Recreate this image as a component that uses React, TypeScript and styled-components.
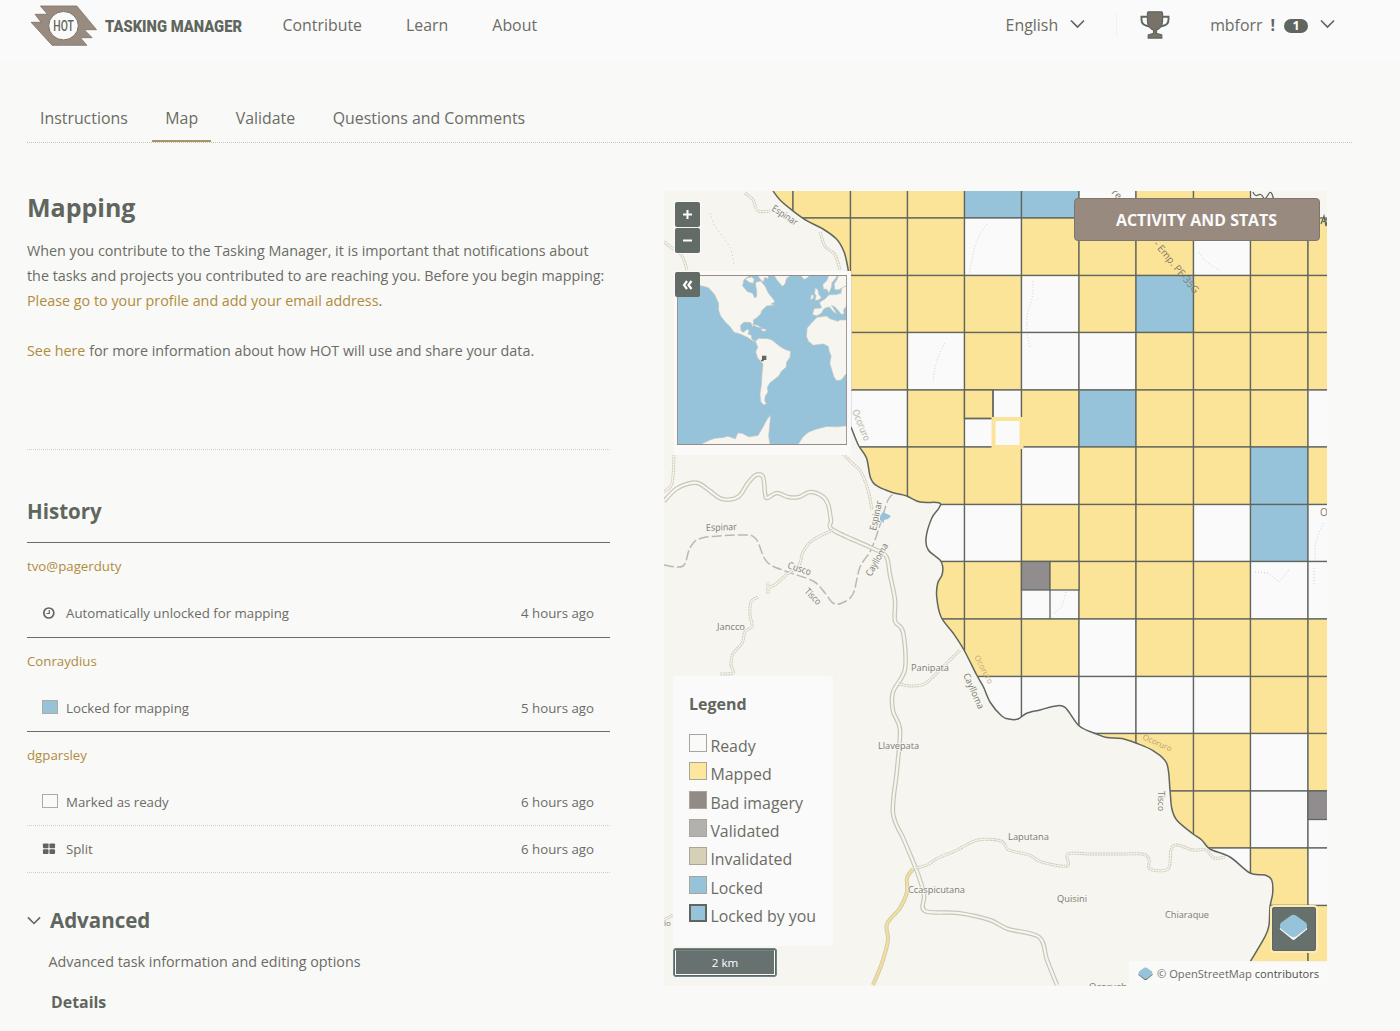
import React from "react";
import styled, { createGlobalStyle } from "styled-components";

const c = {
  page: "#f9f9f8",
  panel: "#fafafa",
  dark: "#60665e",
  text: "#6b6c65",
  brown: "#9a8b80",
  link: "#b08c3c",
  yellow: "#fbe397",
  blue: "#96c3da",
  land: "#f6f5f0",
  road: "#c6c6bd",
  rule: "#cfd0c4",
  bad: "#918d8e",
};

const Global = createGlobalStyle`
  * { box-sizing: border-box; }
  body { margin: 0; background: ${c.page}; overflow: hidden; font-family: "Open Sans", "Noto Sans", sans-serif; color: ${c.text}; }
  h2, h3, h4, p { margin: 0; }
  svg { display: block; flex: none; }
`;

const Page = styled.div`
  width: 1400px;
  height: 1031px;
  overflow: hidden;
`;
const Header = styled.header`
  display: flex;
  align-items: center;
  height: 61px;
  padding: 0 65px 11px 30px;
  background: ${c.panel};
  font-size: 15.9px;
  line-height: 24px;
`;
const Brand = styled.div`
  width: 252.5px;
  display: flex;
  align-items: center;
  gap: 7.5px;
  padding-top: 2px;
`;
const Nav = styled.nav`
  display: flex;
  gap: 44px;
  flex: 1;
`;
const NavLink = styled.a`
  white-space: nowrap;
`;
const HeaderRight = styled.div`
  display: flex;
  align-items: center;
`;
const Language = styled.div`
  display: flex;
  align-items: center;
  gap: 12px;
  padding-right: 31px;
  border-right: 1px solid #f3f1e9;
`;
const Trophy = styled.div`
  margin: 0 40px 0 23px;
`;
const User = styled.div`
  display: flex;
  align-items: center;
`;
const Alert = styled.b`
  margin: 0 9px 0 8px;
  color: ${c.dark};
`;
const Count = styled.span`
  width: 24px;
  height: 14px;
  border-radius: 7px;
  background: ${c.dark};
  color: #fff;
  font-size: 12.5px;
  line-height: 14px;
  font-weight: 700;
  text-align: center;
  margin: 2px 12px 0 0;
`;
const Tabs = styled.nav`
  display: flex;
  gap: 11.6px;
  height: 82px;
  margin: 0 48px 0 27px;
  align-items: flex-end;
  border-bottom: 1px dotted #c3c4b5;
`;
const Tab = styled.a<{ $active?: boolean }>`
  height: 49px;
  padding: 13px 13px 0;
  font-size: 15.88px;
  line-height: 24px;
  border-bottom: 2px solid ${(p) => (p.$active ? "#ab9468" : "transparent")};
`;
const Content = styled.main`
  display: grid;
  grid-template-columns: 583px 663px;
  column-gap: 54px;
  padding: 48px 0 0 27px;
`;
const Left = styled.section`
  display: flex;
  flex-direction: column;
`;
const Title = styled.h2`
  height: 47px;
  font-size: 25px;
  line-height: 33px;
  color: ${c.dark};
`;
const Intro = styled.div`
  height: 212px;
  font-size: 14.33px;
  line-height: 25px;
  white-space: nowrap;
  border-bottom: 1px dotted ${c.rule};
`;
const Paragraph = styled.p`
  margin-bottom: 25px;
`;
const Link = styled.a`
  color: ${c.link};
`;
const HistoryTitle = styled.h3`
  height: 92px;
  padding-top: 46px;
  font-size: 20.5px;
  line-height: 31px;
  color: ${c.dark};
`;
const Group = styled.div`
  border-top: 1px solid #6d6d64;
  font-size: 13.25px;
`;
const UserRow = styled.div`
  height: 47px;
  line-height: 47px;
  color: ${c.link};
`;
const Item = styled.div<{ $rule?: boolean }>`
  display: flex;
  align-items: center;
  height: 46.7px;
  padding: 0 16px 0.6px 15px;
  border-bottom: ${(p) => (p.$rule ? `1px dotted ${c.rule}` : "0")};
`;
const ItemIcon = styled.span`
  width: 24px;
  display: flex;
`;
const ItemLabel = styled.span`
  flex: 1;
`;
const MiniSwatch = styled.span<{ $color: string }>`
  width: 16px;
  height: 14px;
  margin: -2px 0 0 0;
  border: 1px solid #b0aaa2;
  background: ${(p) => p.$color};
`;
const AdvancedTitle = styled.h3`
  display: flex;
  align-items: center;
  gap: 9px;
  margin-top: 30px;
  height: 34px;
  font-size: 20.5px;
  color: ${c.dark};
`;
const ToggleMark = styled.span`
  padding-top: 4px;
`;
const AdvancedText = styled.p`
  padding: 13.5px 0 0 21.5px;
  font-size: 14.33px;
  line-height: 24px;
`;
const Details = styled.h4`
  padding: 16px 0 0 24px;
  font-size: 15.9px;
  line-height: 24px;
  color: ${c.dark};
`;

const MapFrame = styled.section`
  position: relative;
  width: 663px;
  height: 795px;
  background: ${c.land};
`;
const StatsButton = styled.button`
  position: absolute;
  left: 410px;
  top: 7px;
  width: 246px;
  height: 43px;
  padding: 0 1px 0 0;
  border: 1px solid #7c766e;
  border-radius: 4px;
  background: #998a80;
  color: #fafafa;
  font: 700 15.9px "Open Sans", sans-serif;
`;
const ZoomControls = styled.div`
  position: absolute;
  left: 11px;
  top: 11px;
  display: flex;
  flex-direction: column;
  gap: 1px;
  box-shadow: 0 0 0 1px #fafafa;
  border-radius: 2px;
`;
const ControlButton = styled.button`
  width: 25px;
  height: 25px;
  padding: 0;
  border: 0;
  border-radius: 2px;
  display: grid;
  place-items: center;
  background: #636b66;
  color: #fff;
`;
const Overview = styled.div`
  position: absolute;
  left: 10px;
  top: 80px;
  width: 177px;
  height: 184px;
  padding: 4px 0 0 3px;
  background: ${c.panel};
`;
const Collapse = styled.div`
  position: absolute;
  left: 11px;
  top: 81px;
`;
const Legend = styled.div`
  position: absolute;
  left: 9px;
  top: 485px;
  width: 160px;
  height: 270px;
  padding: 15px 0 0 16px;
  background: #fafafa;
  border-radius: 2px;
`;
const LegendTitle = styled.h4`
  font-size: 16px;
  line-height: 27px;
  height: 40px;
  color: ${c.dark};
`;
const LegendRow = styled.div`
  display: flex;
  align-items: flex-start;
  gap: 3.4px;
  height: 28.35px;
  font-size: 15.9px;
  line-height: 30px;
  white-space: nowrap;
`;
const Swatch = styled.span<{ $color: string; $own?: boolean }>`
  width: 18px;
  height: 18px;
  margin-top: 3px;
  border: ${(p) => (p.$own ? `2px solid ${c.dark}` : "1px solid #aaa59b")};
  background: ${(p) => p.$color};
`;
const ScaleBar = styled.div`
  position: absolute;
  left: 9px;
  top: 757px;
  width: 104px;
  height: 29px;
  padding: 2px;
  border-radius: 4px;
  background: ${c.dark};
  box-shadow: inset 0 0 0 1px #6b8790;
`;
const ScaleInner = styled.div`
  height: 25px;
  border: 1px solid #fafafa;
  border-top-color: #77827f;
  text-align: center;
  color: #fff;
  font-size: 11.6px;
  line-height: 23px;
  background: #667170;
`;
const LayerButton = styled.button`
  position: absolute;
  left: 608px;
  top: 716px;
  width: 44px;
  height: 43.5px;
  padding: 0 2px 3px 0;
  border: 1px solid ${c.dark};
  border-radius: 2px;
  display: grid;
  place-items: center;
  background: #66706d;
  box-shadow: 0 0 0 2px #fcebb4;
`;
const Attribution = styled.div`
  position: absolute;
  right: 0;
  bottom: 0;
  width: 198px;
  height: 25px;
  padding-left: 9px;
  display: flex;
  align-items: center;
  gap: 4px;
  background: rgba(250, 250, 250, 0.93);
  font-size: 11.15px;
  white-space: nowrap;
`;
const Dark = styled.span`
  color: #4d524b;
`;

type Pt = [number, number];
const smooth = (p: Pt[]) => {
  let d = `M${p[0][0]} ${p[0][1]}`;
  for (let i = 0; i < p.length - 1; i++) {
    const a = p[Math.max(0, i - 1)], b = p[i], e = p[i + 1], f = p[Math.min(p.length - 1, i + 2)];
    d += `C${b[0] + (e[0] - a[0]) / 6} ${b[1] + (e[1] - a[1]) / 6} ${e[0] - (f[0] - b[0]) / 6} ${e[1] - (f[1] - b[1]) / 6} ${e[0]} ${e[1]}`;
  }
  return d;
};

const northEdge: Pt[] = [[773, 191], [780, 200], [792.7, 210.7], [806.7, 220.7], [823, 229], [836.7, 239.3], [844, 251.7], [847.3, 265], [848.3, 271]];
const southEdge: Pt[] = [[851, 427], [858.3, 445], [866.5, 458], [870.7, 478.3], [878.3, 486.7], [893.3, 492.7], [906.7, 496], [920, 502], [939, 502.7], [939, 508], [931.7, 518.3], [926, 538.3], [928.3, 550], [940, 560], [942.7, 566.7], [942, 575], [937.7, 583.3], [936.7, 596.7], [941, 616.7], [953.3, 633.3], [964, 650], [976.7, 675], [983.5, 687], [990, 702], [1001.7, 716], [1010, 719.3], [1018, 719], [1026.7, 713.3], [1040, 710], [1053, 706.5], [1065, 707.3], [1079.3, 726], [1096.7, 734], [1106.7, 737.5], [1122, 738.5], [1136.7, 743.3], [1153, 750.7], [1166.7, 763.3], [1170, 790], [1171.7, 808], [1176.7, 820], [1191.7, 833], [1201.7, 840], [1210, 849], [1230, 857], [1250, 873], [1265, 875], [1271.7, 880], [1272.7, 893], [1270, 906.7], [1269, 925], [1265, 936.7], [1250, 962]];
const projectArea = `${smooth(northEdge)}L851 275V427${smooth(southEdge).replace(/^M[^C]+/, "")}H1330V191Z`;

const xs = [736, 793, 850.5, 907.5, 964.5, 1021.5, 1079, 1136, 1193.5, 1250.5, 1308, 1365];
const ys = [161, 218, 275.5, 332.5, 390, 447, 504.5, 561.5, 619, 676.5, 733.5, 791, 848, 905.5, 962];
// Y mapped, W ready, B locked, "." outside the project
const rows = [
  "YYYYBBWYY..",
  "YYYYWYYYWYY",
  "..YYYWYBYYY",
  "..YWYWWYYYY",
  "..WYWYBYYYW",
  "..YYYWYYYBY",
  "..WWWYYYWBW",
  "...YYWYYYWW",
  "...YYYWYYYY",
  "....WWWWWYY",
  "......YYYWY",
  ".......YYWW",
  "........WYW",
  ".........YY",
];
const fills: Record<string, string> = { Y: c.yellow, W: c.panel, B: c.blue };

const label = { fontFamily: "Open Sans, sans-serif", fontSize: 9.5, fill: "#7f7a72", stroke: c.land, strokeWidth: 1.5, paintOrder: "stroke" as const };
const places: [string, number, number, number, number][] = [
  ["Espinar", 771, 210, 33, 29],
  ["Espinar", 706, 531, -2, 31],
  ["Cusco", 787, 568, 18, 24],
  ["Tisco", 804, 592, 45, 19],
  ["Jancco", 717, 630, 0, 28],
  ["Espinar", 876, 531, -78, 30],
  ["Caylloma", 871, 577, -61, 36],
  ["Panipata", 911, 671, 0, 38],
  ["Caylloma", 963, 675, 66, 38],
  ["Llavepata", 878, 749, 0, 41],
  ["Ccaspicutana", 908, 893, 0, 57],
  ["Laputana", 1008, 840, 0, 41],
  ["Quisini", 1057, 902, 0, 30],
  ["Chiaraque", 1165, 918, 0, 44],
  ["Tisco", 1158, 791, 90, 20],
  ["Ocoruro", 852, 411, 68, 33],
];

const mainRoads: Pt[][] = [
  [[664, 501], [676, 489], [687, 484], [698, 483], [710, 491], [722, 499], [738, 497], [748, 483], [756, 475], [763, 477], [765, 493], [767, 498], [777, 493], [788, 497], [799, 497], [810, 492], [822, 496], [828, 504], [831, 520], [833, 530], [872, 548], [886, 556], [890, 575], [895, 600], [895, 621], [903, 632], [905, 669], [893, 692], [893, 711], [900, 730], [897, 770], [893, 813], [904, 840], [918, 874], [924, 895], [925, 911], [958, 913], [990, 920], [1008, 929], [1039, 937], [1047, 960], [1057, 985]],
];
const lanes: Pt[][] = [
  [[833, 530], [813, 540], [803, 552], [799, 565], [786, 575], [776, 584], [769, 588], [768, 594], [768, 582]],
  [[758, 597], [751, 602], [750, 615], [752, 626], [745, 632], [742, 643], [733, 654], [731, 665], [733, 673], [720, 674]],
  [[899, 684], [911, 686], [924, 684], [935, 675], [948, 662], [960, 650]],
  [[916, 868], [927, 865], [938, 858], [955, 851], [978, 840], [1001, 841], [1009, 850], [1029, 855], [1042, 862], [1067, 866], [1068, 854], [1090, 854], [1120, 854], [1142, 854], [1149, 859], [1150, 869], [1168, 869], [1171, 850], [1177, 845], [1193, 850], [1206, 850], [1214, 858], [1225, 857]],
  [[745, 193], [753, 200], [758, 211], [770, 211]],
  [[820, 232], [825, 246], [835, 255], [840, 270]],
  [[843, 454], [852, 463], [861, 472], [868, 490], [872, 510]],
  [[664, 242], [672, 248], [682, 256], [687, 270]],
  [[664, 492], [672, 483], [674, 455]],
  [[664, 920], [673, 915]],
];

function Roads() {
  return (
    <g fill="none" strokeLinejoin="round">
      <path d={smooth([[664, 565], [683, 566], [690, 548], [702, 538], [743, 535], [756, 539], [767, 562], [788, 572], [813, 581], [825, 593], [833, 603], [842, 603], [853, 594], [860, 567], [871, 550], [880, 525], [888, 500], [895, 493]])} stroke="#babab2" strokeWidth="1.5" strokeDasharray="10 3" />
      {mainRoads.map((r, i) => (
        <g key={i}>
          <path d={smooth(r)} stroke={c.road} strokeWidth="4.6" />
          <path d={smooth(r)} stroke="#f8f6e9" strokeWidth="2.2" />
        </g>
      ))}
      {lanes.map((r, i) => (
        <g key={i}>
          <path d={smooth(r)} stroke="#cbcac0" strokeWidth="3" strokeDasharray="2 .6" />
          <path d={smooth(r)} stroke="#f8f5e4" strokeWidth="1.2" />
        </g>
      ))}
      <path d={smooth([[913, 869], [907, 878], [907, 892], [900, 908], [887, 924], [888, 940], [882, 963], [873, 985]])} stroke="#d2cba8" strokeWidth="4" />
      <path d={smooth([[913, 869], [907, 878], [907, 892], [900, 908], [887, 924], [888, 940], [882, 963], [873, 985]])} stroke="#f3df9d" strokeWidth="2.2" />
      <path d="M880 516l3-4 4 2 4 2-3 3-4 1v3l-4-3z" fill={c.blue} />
    </g>
  );
}

function TaskMap() {
  return (
    <svg width="663" height="795" viewBox="664 191 663 795">
      <defs>
        <clipPath id="area"><path d={projectArea} /></clipPath>
      </defs>
      <rect x="664" y="191" width="663" height="795" fill={c.land} />
      <Roads />
      <g clipPath="url(#area)">
        {rows.map((row, r) =>
          row.split("").map((s, k) =>
            s === "." ? null : (
              <rect key={`${r}-${k}`} x={xs[k]} y={ys[r]} width={xs[k + 1] - xs[k]} height={ys[r + 1] - ys[r]} fill={fills[s]} stroke={c.dark} strokeWidth="1.3" />
            )
          )
        )}
        <g stroke={c.dark} strokeWidth="1.3">
          <rect x="964.5" y="390" width="28.5" height="28.5" fill={c.yellow} />
          <path d="M993 390V447M964.5 418.5H1021.5" />
          <rect x="1021.5" y="561.5" width="28.5" height="28.5" fill={c.bad} />
          <rect x="1050" y="561.5" width="29" height="28.5" fill={c.yellow} />
          <path d="M1050 590V619" />
          <rect x="1308" y="791" width="29" height="28.5" fill={c.bad} />
        </g>
        <rect x="993.5" y="419" width="28" height="28" fill={c.panel} stroke={c.yellow} strokeWidth="4" />
        <g fill="none" stroke="#cfcec7" strokeWidth="1" strokeDasharray="1 2">
          <path d="M987 224q-11 14-14 30t-4 20M945 343q-10 15-12 40M1033 281q1 15-4 27t1 40M1199 252q4 10 22 19M1066 592l-4 14-8 8M1255 572l13 1 11 9 10-12M1324 523q-12 20-8 38M1314 568v18" />
        </g>
      </g>
      <g fill="none" stroke={c.dark} strokeWidth="1.5">
        <path d={smooth(northEdge)} />
        <path d={smooth(southEdge)} />
      </g>
      <path d="M851 276V390" stroke="#dddacb" strokeWidth="1.5" />
      <path d="M1253 192q2 5 5 3t5 2 5-2 5 2 5 1M1321 224l3-8 2 10 2-8-5 4" fill="none" stroke={c.dark} strokeWidth="1.3" />
      <path d="M710 213l4 12 9 12 8 12 3 15" fill="none" stroke={c.road} strokeDasharray="1 3" />
      <path d="M1247 967l-15 16-18 4M1250 962h77M1250 962v24M1308 962v24" fill="none" stroke={c.road} strokeDasharray="2 1" />
      {places.map(([t, x, y, a, w], i) => (
        <text key={i} {...label} fill={t === "Ocoruro" ? "#b5b3aa" : label.fill} transform={`translate(${x} ${y}) rotate(${a})`} textLength={w} lengthAdjust="spacingAndGlyphs">{t}</text>
      ))}
      <g fontFamily="Open Sans, sans-serif" fontSize="10" fill="#84796b">
        <text transform="translate(1153 244) rotate(50.5)" textLength="65">- Emp. PE-35G</text>
        <text transform="translate(1111 193) rotate(45)">re</text>
        <text x="1089" y="990" fontSize="9.5">Ocoruch</text>
        <text x="1320" y="516" fontSize="10">O</text>
        <text x="664" y="926" fontSize="8">io</text>
        <text transform="translate(974 657) rotate(62)" fontSize="8" fill="#c5ad79">Ocoruro</text>
        <text transform="translate(1142 739) rotate(24)" fontSize="8" fill="#b59f73">Ocoruro</text>
      </g>
    </svg>
  );
}

function WorldMap() {
  return (
    <svg width="170" height="170" viewBox="51.5 286 509 508">
      <rect x="51" y="285" width="510" height="510" fill={c.blue} />
      <g fill={c.land} stroke="#c3c3bb" strokeWidth="2" strokeLinejoin="round">
        <path d="M50 285H272L252 300 248 318 262 335 278 340 284 354 290 350 290 335 286 308 302 303 316 320 324 338 340 358 345 366 333 372 345 376 320 378 306 392 302 402 290 414 280 420 282 438 277 440 272 428 252 427 242 436 243 452 250 457 262 448 268 452 264 462 274 466 276 478 286 484 280 484 262 472 240 462 222 457 210 440 194 424 182 408 176 392 176 370 164 344 146 324 124 318 90 322 50 310Z" />
        <path d="M255 297l20-6 8 8-4 12-12-4zM292 285h34l-2 12-10-4-4 14-12-12zM341 285l10 16 16 18 8-6 4-16 14-12zM420 285l12 14 12-6 3-8z" />
        <path d="M275 432l16 3 14 9-10-1-12-6zM305 446l14 2-4 7-12-3z" />
        <path d="M286 484l10-9 26 1 14 4 22 18 16 10 18 6-2 18-10 14-2 16-14 12-8 14-18 14-8 6-8 14 2 14-8 12-2 14 6 10-10 2-8-10-2-22 4-28 2-32 3-30-16-18-6-18 6-14z" />
        <path d="M561 420h-22l-6 4-24-8-10-8-28 4-14 14-16 18-2 26 6 14 14 12 32-4 14 8 2 14 6 14-4 22 12 40 8 12 14-2 18-22z" />
        <path d="M561 318L545 322 542 340 528 344 506 345 496 356 478 368 484 384 462 386 457 404 470 408 484 400 492 386 508 381 520 396 530 402 522 388 514 377 524 381 536 394 544 404 552 401 550 390 561 376Z" />
        <path d="M507 285L500 302 488 314 490 328 500 328 506 340 514 322 516 308 528 294 530 285ZM536 285L530 300 522 312 524 330 536 330 561 316V285Z" />
        <path d="M466 323l8 8 2 12 8 10-10 8-10-1 4-12-5-8zM454 344l8 3-4 10-7 2z" />
        <path d="M120 794l28-14 18-6 24-2 14-4 22 8 8-18 14 2 18 10 28-4 14-24 12-22 12-16-2 22-4 42 4 24 6 2zM561 737l-32 3-30-1-34 9-20 8-16 14-16 24H561z" />
      </g>
      <path d="M306 527h13v13h-8v4h-8v-5h3z" fill={c.dark} />
      <rect x="52.5" y="287" width="507" height="506" fill="none" stroke={c.brown} strokeWidth="3" />
    </svg>
  );
}

const Chevron = ({ w = 15 }: { w?: number }) => (
  <svg width={w} height={w * 0.8} viewBox="0 0 15 12" fill="none" stroke={c.dark} strokeWidth="1.7"><path d="M1 1.500l6.500 6.500L14 1.500" /></svg>
);
const Logo = () => (
  <svg width="67.500" height="42" viewBox="0 0 67.500 42">
    <path d="M10.400 1H46.800L66.500 24.700H54.300L62.100 32.700H50.400L56.800 40.300H22.100L1.100 17.300H11.100L5 9.300H17.500Z" fill={c.brown} stroke="#797269" strokeWidth=".8" />
    <ellipse cx="33.500" cy="20.700" rx="14.800" ry="14.200" fill={c.panel} stroke="#777168" strokeWidth="1" />
    <text x="23.300" y="26.200" fontFamily="Roboto, sans-serif" fontWeight="500" fontSize="15.500" textLength="20.600" lengthAdjust="spacingAndGlyphs" fill={c.dark}>HOT</text>
  </svg>
);
const BrandText = () => (
  <svg width="160" height="24" viewBox="0 0 160 24">
    <text x="0" y="18" fontFamily="Roboto, sans-serif" fontWeight="900" fontSize="16" textLength="137" lengthAdjust="spacingAndGlyphs" fill={c.dark}>TASKING MANAGER</text>
  </svg>
);
const TrophyIcon = () => (
  <svg width="30" height="28" viewBox="0 0 31 29">
    <path d="M8 6H1.500V9q0 6 8.500 7M23 6h6.500V9q0 6-8.500 7" fill="none" stroke={c.dark} strokeWidth="2" />
    <path d="M8.500.8h14l.8 1.200v8q0 6-4.800 9l-1.500 1v3.200l5.500 1.600V28H8.500v-3.200l5.500-1.600V20l-1.500-1q-4.800-3-4.800-9V2z" fill="#787269" stroke={c.dark} strokeWidth="1.300" />
  </svg>
);
const Diamond = ({ w }: { w: number }) => (
  <svg width={w} height={w * 0.9} viewBox="0 0 30 27">
    <path d="M1 15.500L15 26.800 29 15.500 27 13H3z" fill={w > 20 ? "#fafafa" : c.dark} stroke={w > 20 ? "#fafafa" : c.dark} />
    <path d="M12.500 1.500Q15 0 17.500 1.500L28 9Q30 12 28 15.500L18 23Q15 25 12 23L2 15.500Q0 12 2 9Z" fill={c.blue} />
  </svg>
);
const ClockIcon = () => (
  <svg width="14" height="14" viewBox="0 0 14 14" fill="none" stroke={c.dark} strokeWidth="1.700"><circle cx="6.800" cy="7" r="5" /><path d="M7.300 4v3.500H4.500" strokeWidth="1.200" /></svg>
);
const SplitIcon = () => (
  <svg width="14" height="12" viewBox="0 0 15 12" fill={c.dark}><rect x="1" width="6" height="5.200" rx="1" /><rect x="8" width="6" height="5.200" rx="1" /><rect x="1" y="6.200" width="6" height="5.200" rx="1" /><rect x="8" y="6.200" width="6" height="5.200" rx="1" /></svg>
);

const legend: [string, string][] = [
  ["Ready", "#fafafa"], ["Mapped", "#fde79f"], ["Bad imagery", "#918a87"], ["Validated", "#b2b1ad"],
  ["Invalidated", "#d6d0b6"], ["Locked", c.blue], ["Locked by you", c.blue],
];

export default function App() {
  return (
    <Page>
      <Global />
      <Header>
        <Brand><Logo /><div><BrandText /></div></Brand>
        <Nav><NavLink>Contribute</NavLink><NavLink>Learn</NavLink><NavLink>About</NavLink></Nav>
        <HeaderRight>
          <Language>English<Chevron /></Language>
          <Trophy><TrophyIcon /></Trophy>
          <User>mbforr<Alert>!</Alert><Count>1</Count><Chevron /></User>
        </HeaderRight>
      </Header>
      <Tabs>
        <Tab>Instructions</Tab><Tab $active>Map</Tab><Tab>Validate</Tab><Tab>Questions and Comments</Tab>
      </Tabs>
      <Content>
        <Left>
          <Title>Mapping</Title>
          <Intro>
            <Paragraph>
              When you contribute to the Tasking Manager, it is important that notifications about<br />
              the tasks and projects you contributed to are reaching you. Before you begin mapping:<br />
              <Link>Please go to your profile and add your email address</Link>.
            </Paragraph>
            <Paragraph><Link>See here</Link> for more information about how HOT will use and share your data.</Paragraph>
          </Intro>
          <HistoryTitle>History</HistoryTitle>
          <Group>
            <UserRow>tvo@pagerduty</UserRow>
            <Item><ItemIcon><ClockIcon /></ItemIcon><ItemLabel>Automatically unlocked for mapping</ItemLabel>4 hours ago</Item>
          </Group>
          <Group>
            <UserRow>Conraydius</UserRow>
            <Item><ItemIcon><MiniSwatch $color={c.blue} /></ItemIcon><ItemLabel>Locked for mapping</ItemLabel>5 hours ago</Item>
          </Group>
          <Group>
            <UserRow>dgparsley</UserRow>
            <Item $rule><ItemIcon><MiniSwatch $color={c.panel} /></ItemIcon><ItemLabel>Marked as ready</ItemLabel>6 hours ago</Item>
            <Item $rule><ItemIcon><SplitIcon /></ItemIcon><ItemLabel>Split</ItemLabel>6 hours ago</Item>
          </Group>
          <AdvancedTitle><ToggleMark><Chevron w={14} /></ToggleMark>Advanced</AdvancedTitle>
          <AdvancedText>Advanced task information and editing options</AdvancedText>
          <Details>Details</Details>
        </Left>
        <MapFrame>
          <TaskMap />
          <ZoomControls>
            <ControlButton><svg width="11" height="11" stroke="#fff" strokeWidth="2"><path d="M1 5.500h9M5.500 1v9" /></svg></ControlButton>
            <ControlButton><svg width="11" height="11" stroke="#fff" strokeWidth="2"><path d="M1 5.500h9" /></svg></ControlButton>
          </ZoomControls>
          <Overview><WorldMap /></Overview>
          <Collapse>
            <ControlButton><svg width="11" height="10" fill="none" stroke="#fff" strokeWidth="2.200"><path d="M5 1L2 5l3 4M9.500 1l-3 4 3 4" /></svg></ControlButton>
          </Collapse>
          <StatsButton>ACTIVITY AND STATS</StatsButton>
          <Legend>
            <LegendTitle>Legend</LegendTitle>
            {legend.map(([name, color]) => (
              <LegendRow key={name}><Swatch $color={color} $own={name === "Locked by you"} />{name}</LegendRow>
            ))}
          </Legend>
          <ScaleBar><ScaleInner>2 km</ScaleInner></ScaleBar>
          <LayerButton><Diamond w={29} /></LayerButton>
          <Attribution><Diamond w={15} /><span>© OpenStreetMap <Dark>contributors</Dark></span></Attribution>
        </MapFrame>
      </Content>
    </Page>
  );
}
